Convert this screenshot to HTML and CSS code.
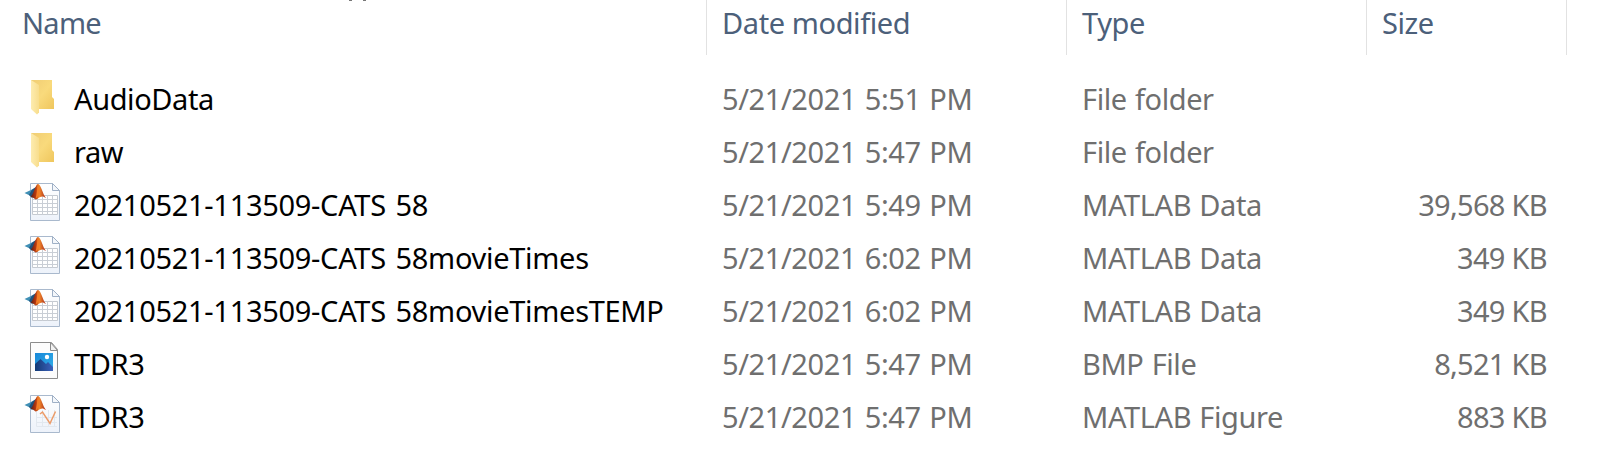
FILE: index.html
```html
<!DOCTYPE html>
<html lang="en">
<head>
<meta charset="utf-8">
<title>Files</title>
<link rel="stylesheet" href="styles.css">
</head>
<body>
<svg class="defs" width="0" height="0" aria-hidden="true">
  <defs>
    <linearGradient id="fold" x1="0" x2="1" y1="0" y2="1"><stop offset="0" stop-color="#f0cd74"/><stop offset=".5" stop-color="#f9da7c"/><stop offset="1" stop-color="#efc65d"/></linearGradient>
    <linearGradient id="flap" x1="0" x2="1"><stop offset="0" stop-color="#fdecb0"/><stop offset="1" stop-color="#f8dd8c"/></linearGradient>
    <linearGradient id="sheet" x1="0" x2="0" y1="0" y2="1"><stop offset="0" stop-color="#ffffff"/><stop offset="1" stop-color="#edf2fa"/></linearGradient>
    <linearGradient id="peak" x1="0" x2="1"><stop offset="0" stop-color="#5d1c14"/><stop offset=".35" stop-color="#b8380f"/><stop offset=".55" stop-color="#f38a2c"/><stop offset="1" stop-color="#a82615"/></linearGradient>
    <linearGradient id="sky" x1="0" x2="1" y1="0" y2="1"><stop offset="0" stop-color="#1687d8"/><stop offset="1" stop-color="#35b1ea"/></linearGradient>
    <linearGradient id="hill" x1="0" x2="1"><stop offset="0" stop-color="#123a75"/><stop offset="1" stop-color="#3d62bd"/></linearGradient>
    <symbol id="folder" viewBox="0 0 40 44">
      <path d="M7 6H28V23L30 25V35H7Z" fill="url(#fold)"/>
      <path d="M7 6L15 11V38.500L13 40.500L7 35Z" fill="url(#flap)"/>
    </symbol>
    <symbol id="page" viewBox="0 0 40 44">
      <path d="M6.500 3.500H28.500L35.500 10.500V40.500H6.500Z" fill="url(#sheet)" stroke="#a9b9cd"/>
      <path d="M28.500 3.500V10.500H35.500Z" fill="#f4f7fb" stroke="#9fb0c6"/>
    </symbol>
    <symbol id="membrane" viewBox="0 0 40 44">
      <path d="M.5 13L8 9.500L11 12L9 17Z" fill="#3f8fb5"/>
      <path d="M5 15L8 9.500L12 7L11 15L8 18Z" fill="#20527c"/>
      <path d="M6.500 16.500C10 14.500 11 4.500 14 4C17 4 18.500 14 22 18L19 16.500C15.500 16 14.500 19 11.500 19.500C10 18 8.500 17 6.500 16.500Z" fill="url(#peak)"/>
      <path d="M13.500 5C13.500 9 12.500 15 11.500 19C14 17 15.500 14 15.500 9Z" fill="#f47d26"/>
    </symbol>
    <symbol id="data" viewBox="0 0 40 44">
      <use href="#page"/>
      <path d="M8.500 15.500H33.500V34.500H8.500Z" fill="#fff" stroke="#c5cad1"/>
      <path d="M9 19.500H33M9 23.500H33M9 27.500H33M9 31.500H33M13.500 15V35M18.500 15V35M23.500 15V35M28.500 15V35" stroke="#c9ced5" fill="none"/>
      <use href="#membrane"/>
    </symbol>
    <symbol id="figure" viewBox="0 0 40 44">
      <use href="#page"/>
      <path d="M12.500 19V34.500H33M12 30.500H33M12 25.500H33M18.500 18V35M24.500 18V35M30.500 18V35" stroke="#e2e8ef" fill="none"/>
      <path d="M16 22L18.500 20L26 31.500L31.500 19.500" stroke="#ec9b68" stroke-width="1.500" fill="none"/>
      <use href="#membrane"/>
    </symbol>
    <symbol id="bitmap" viewBox="0 0 40 44">
      <path d="M6.500 3.500H27.500L33.500 10.500V39.500H6.500Z" fill="#fcfcfc" stroke="#8c8c8c"/>
      <path d="M26.500 3.500V11.500H33.500Z" fill="#f2f2f2" stroke="#8c8c8c"/>
      <path d="M11 14H29V32H11Z" fill="url(#sky)"/>
      <circle cx="23" cy="18" r="2.200" fill="#fff"/>
      <path d="M11 25L16.500 20L22 25L24 23L29 28V32H11Z" fill="url(#hill)"/>
    </symbol>
  </defs>
</svg>
<main class="list">
  <div class="specks"><i></i><i></i></div>
  <div class="row head"><span class="name">Name</span><span class="h-date">Date modified</span><span>Type</span><span>Size</span></div>
  <div class="row"><span class="name"><svg><use href="#folder"/></svg>AudioData</span><span class="date">5/21/2021 5:51 PM</span><span class="type">File folder</span><span></span></div>
  <div class="row"><span class="name"><svg><use href="#folder"/></svg>raw</span><span class="date">5/21/2021 5:47 PM</span><span class="type">File folder</span><span></span></div>
  <div class="row"><span class="name long"><svg><use href="#data"/></svg>20210521-113509-CATS 58</span><span class="date">5/21/2021 5:49 PM</span><span class="type">MATLAB Data</span><span class="size">39,568 KB</span></div>
  <div class="row"><span class="name long"><svg><use href="#data"/></svg>20210521-113509-CATS 58movieTimes</span><span class="date">5/21/2021 6:02 PM</span><span class="type">MATLAB Data</span><span class="size">349 KB</span></div>
  <div class="row"><span class="name long"><svg><use href="#data"/></svg>20210521-113509-CATS 58movieTimesTEMP</span><span class="date">5/21/2021 6:02 PM</span><span class="type">MATLAB Data</span><span class="size">349 KB</span></div>
  <div class="row"><span class="name"><svg><use href="#bitmap"/></svg>TDR3</span><span class="date">5/21/2021 5:47 PM</span><span class="type">BMP File</span><span class="size">8,521 KB</span></div>
  <div class="row"><span class="name"><svg><use href="#figure"/></svg>TDR3</span><span class="date">5/21/2021 5:47 PM</span><span class="type">MATLAB Figure</span><span class="size">883 KB</span></div>
</main>
</body>
</html>
```
FILE: styles.css
```css
body { margin: 0; background: #fff; font: 29px/53px "Noto Sans", sans-serif; color: #6f6f6f; letter-spacing: -.4px; }
.defs { position: absolute; }
.list { width: 1567px; height: 469px; overflow: hidden; }
.specks { position: absolute; top: 0; left: 349px; display: flex; gap: 11px; }
.specks i { width: 3px; height: 1px; background: #777; }
.row { display: grid; grid-template-columns: 707px 360px 300px 200px; height: 53px; white-space: pre; }
.row > span { padding-left: 15px; }
.row > .name { display: flex; align-items: center; padding-left: 24px; color: #000; }
.row > .long { letter-spacing: -.3px; word-spacing: 2.5px; }
.row > .date { letter-spacing: -.4px; word-spacing: 1.5px; }
.row > .type { word-spacing: 1px; }
.name svg { width: 40px; height: 44px; margin: 0 10px 5px 0; }
.row.head { height: 55px; margin-bottom: 17px; color: #4c607a; line-height: 46px; }
.head > span { border-right: 1px solid #e2e2e2; }
.row.head > .name { padding-left: 22px; color: #4c607a; align-items: flex-start; letter-spacing: -.7px; }
.row > .size { text-align: right; padding-right: 20px; letter-spacing: -.7px; }
```
